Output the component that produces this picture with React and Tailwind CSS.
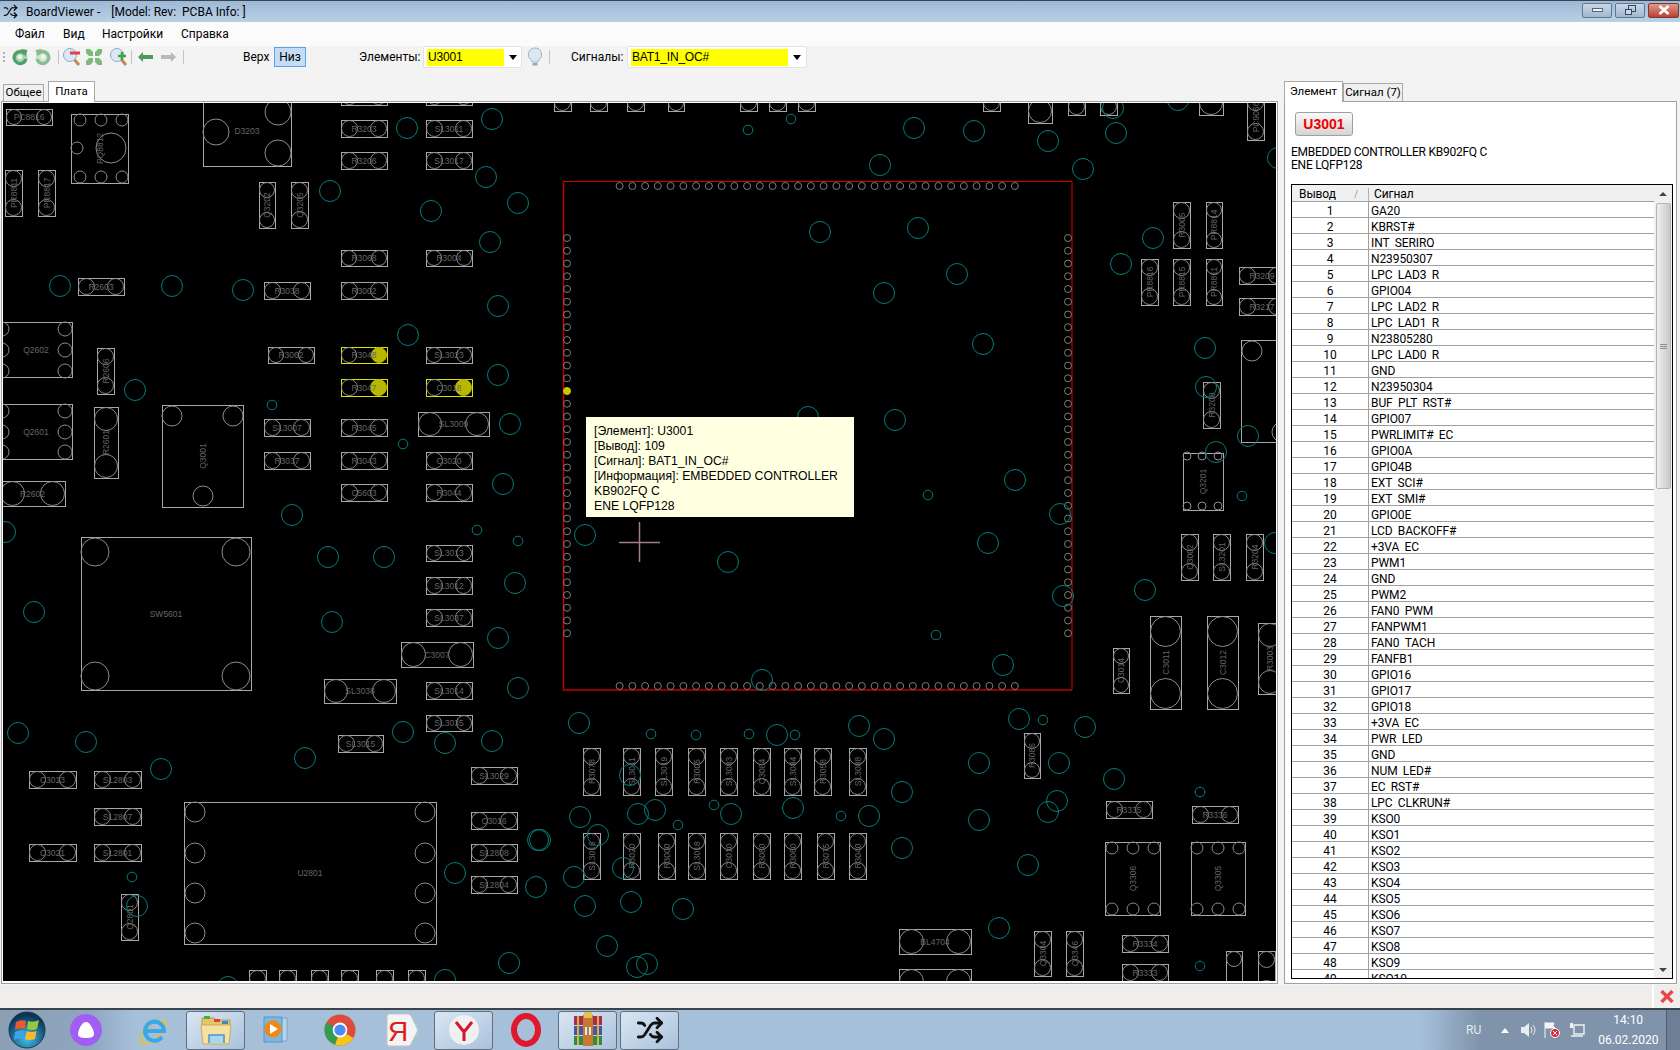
import React from "react";
import { Shuffle } from "lucide-react";

const pins = [
  "GA20", "KBRST#", "INT_SERIRQ", "N23950307", "LPC_LAD3_R", "GPIO04", "LPC_LAD2_R", "LPC_LAD1_R",
  "N23805280", "LPC_LAD0_R", "GND", "N23950304", "BUF_PLT_RST#", "GPIO07", "PWRLIMIT#_EC", "GPIO0A",
  "GPIO4B", "EXT_SCI#", "EXT_SMI#", "GPIO0E", "LCD_BACKOFF#", "+3VA_EC", "PWM1", "GND", "PWM2",
  "FAN0_PWM", "FANPWM1", "FAN0_TACH", "FANFB1", "GPIO16", "GPIO17", "GPIO18", "+3VA_EC", "PWR_LED",
  "GND", "NUM_LED#", "EC_RST#", "LPC_CLKRUN#", "KSO0", "KSO1", "KSO2", "KSO3", "KSO4", "KSO5", "KSO6",
  "KSO7", "KSO8", "KSO9", "KSO10",
];

// two pad parts: x1, y1, x2, y2, label, highlighted pad
const parts = [
  [6, 109, 52, 125, "PC8816"], [5, 170, 22, 216, "PR8811"], [38, 170, 55, 216, "PR8817"],
  [259, 182, 275, 228, "Q3202"], [291, 182, 308, 228, "Q3205"],
  [341, 88, 387, 105, ""], [426, 88, 472, 105, ""],
  [341, 120, 387, 137, "R3203"], [426, 120, 472, 137, "SL3011"], [341, 152, 387, 169, "R3206"], [426, 152, 472, 169, "SL3017"],
  [341, 250, 387, 266, "R3068"], [426, 250, 472, 266, "R3004"], [78, 278, 124, 295, "R2603"],
  [264, 282, 310, 299, "R3038"], [341, 282, 387, 299, "R3002"], [268, 347, 314, 363, "R3062"],
  [341, 347, 387, 363, "R3048", true], [341, 379, 387, 396, "R3047", true], [426, 379, 472, 396, "C3018", true],
  [426, 347, 472, 363, "SL3023"], [97, 348, 114, 394, "R2606"], [94, 407, 118, 478, "R2601"],
  [0, 481, 65, 506, "R2602"], [264, 419, 310, 436, "SL3007"], [341, 419, 387, 436, "R3045"], [418, 412, 489, 436, "SL3009"],
  [264, 452, 310, 469, "R3037"], [341, 452, 387, 469, "R3043"], [426, 452, 472, 469, "C3020"],
  [341, 484, 387, 501, "C5603"], [426, 484, 472, 501, "R3044"],
  [426, 545, 472, 561, "SL3013"], [426, 577, 472, 594, "SL3012"], [426, 609, 472, 626, "SL3037"], [401, 642, 473, 667, "C3007"],
  [324, 679, 396, 703, "SL3038"], [426, 682, 472, 699, "SL3014"], [426, 715, 472, 731, "SL3035"], [338, 735, 383, 752, "SL3015"],
  [29, 771, 76, 788, "C3013"], [94, 771, 141, 788, "SL2803"], [94, 808, 141, 825, "SL2807"], [94, 844, 141, 861, "SL2801"],
  [29, 844, 76, 861, "C3021"], [471, 767, 517, 784, "SL3029"], [471, 812, 517, 829, "C3016"], [471, 844, 517, 861, "SL2808"],
  [471, 876, 517, 893, "SL2804"], [121, 894, 138, 940, "Q2801"],
  [249, 970, 266, 1016, ""], [279, 970, 296, 1016, ""], [311, 970, 328, 1016, ""], [341, 970, 358, 1016, ""], [376, 970, 393, 1016, ""], [408, 970, 425, 1016, ""],
  [554, 65, 571, 111, ""], [590, 65, 607, 111, ""], [627, 65, 644, 111, ""], [668, 65, 684, 111, ""], [740, 65, 757, 111, ""],
  [769, 65, 786, 111, ""], [798, 65, 815, 111, ""], [983, 65, 1000, 111, ""], [1028, 68, 1052, 123, ""], [1068, 69, 1085, 115, ""],
  [1100, 69, 1117, 115, ""], [1199, 60, 1223, 115, ""], [1247, 94, 1264, 140, "PC9066"],
  [583, 748, 600, 795, "R3078"], [623, 748, 640, 795, "SL3011"], [655, 748, 672, 795, "SL3019"], [688, 748, 705, 795, "R3005"],
  [720, 748, 737, 795, "SL3083"], [753, 748, 770, 795, "Q3084"], [784, 748, 801, 795, "SL3084"], [814, 748, 831, 795, "R3058"], [849, 748, 866, 795, "SL3088"],
  [583, 833, 600, 879, "SL3016"], [623, 833, 640, 879, "R3020"], [658, 833, 675, 879, "R3000"], [688, 833, 705, 879, "SL3018"],
  [720, 833, 737, 879, "C3010"], [753, 833, 770, 879, "R3080"], [784, 833, 801, 879, "R3060"], [817, 833, 834, 879, "R3075"], [849, 833, 866, 879, "R3040"],
  [1173, 202, 1190, 248, "R3005"], [1206, 202, 1222, 248, "PR8814"], [1141, 259, 1158, 305, "PR8816"], [1173, 259, 1190, 305, "PR8815"],
  [1206, 259, 1222, 305, "PR8811"], [1239, 267, 1285, 284, "R3209"], [1239, 298, 1285, 315, "R3217"], [1203, 382, 1220, 428, "R3208"],
  [1181, 534, 1198, 580, "Q3002"], [1213, 534, 1230, 580, "SL3201"], [1246, 534, 1263, 580, "R3204"], [1113, 648, 1129, 693, "C3014"],
  [1150, 616, 1181, 709, "C3011"], [1207, 616, 1238, 709, "C3012"], [1258, 623, 1282, 694, "R3003"], [1024, 733, 1040, 778, "R3086"],
  [1106, 801, 1152, 818, "R3335"], [1192, 806, 1238, 823, "R3336"], [1034, 931, 1051, 976, "Q3304"], [1066, 931, 1083, 976, "Q3346"],
  [1122, 935, 1168, 952, "R3334"], [1122, 964, 1168, 981, "R3333"], [1226, 951, 1242, 997, ""], [1258, 951, 1275, 997, ""],
  [899, 929, 971, 954, "BL4704"], [899, 969, 971, 994, ""],
];

// packages with their own pad layout: x1, y1, x2, y2, label, vertical label, pads [x, y, r]
const packages = [
  [71, 114, 128, 183, "PQ8812", true, [[111, 148, 15], [80, 120, 6], [101, 120, 6], [122, 120, 6], [77, 148, 6], [80, 177, 6], [101, 177, 6], [122, 177, 6]]],
  [203, 80, 291, 166, "D3203", false, [[216, 132, 13], [278, 112, 13], [278, 153, 13]]],
  [-10, 322, 72, 377, "Q2602", false, [[65, 329, 7], [65, 350, 7], [65, 371, 7], [2, 329, 7], [2, 350, 7], [2, 371, 7]]],
  [-10, 404, 72, 459, "Q2601", false, [[65, 411, 7], [65, 432, 7], [65, 452, 7], [2, 411, 7], [2, 432, 7], [2, 452, 7]]],
  [162, 405, 243, 507, "Q3001", true, [[172, 416, 10], [233, 416, 10], [203, 496, 10]]],
  [81, 537, 251, 690, "SW5601", false, [[95, 552, 14], [236, 552, 14], [95, 676, 14], [236, 676, 14]]],
  [184, 802, 436, 944, "U2801", false, [[195, 812, 10], [195, 853, 10], [195, 893, 10], [195, 933, 10], [425, 812, 10], [425, 853, 10], [425, 893, 10], [425, 933, 10]]],
  [1183, 453, 1223, 510, "Q3201", true, [[1187, 456, 4], [1202, 456, 4], [1218, 456, 4], [1187, 506, 4], [1202, 506, 4], [1218, 506, 4]]],
  [1241, 340, 1300, 442, "", false, [[1252, 351, 10], [1282, 432, 10]]],
  [1105, 842, 1160, 915, "Q3306", true, [[1112, 848, 6], [1133, 848, 6], [1154, 848, 6], [1112, 909, 6], [1133, 909, 6], [1154, 909, 6]]],
  [1191, 842, 1245, 915, "Q3305", true, [[1197, 848, 6], [1218, 848, 6], [1239, 848, 6], [1197, 909, 6], [1218, 909, 6], [1239, 909, 6]]],
];

const vias = [
  [407, 128], [492, 119], [486, 177], [518, 203], [431, 211], [330, 191], [490, 242], [60, 286], [172, 286], [243, 290], [498, 306], [408, 335],
  [498, 375], [135, 390], [510, 424], [503, 484], [292, 515], [5, 532], [34, 612], [18, 733], [86, 742], [161, 769], [328, 557], [384, 557],
  [515, 583], [332, 622], [498, 638], [518, 688], [403, 732], [445, 743], [492, 741], [305, 758], [538, 840], [455, 873], [536, 887], [137, 906],
  [509, 963], [228, 987], [445, 980], [914, 128], [974, 131], [1048, 141], [880, 165], [1083, 169], [820, 232], [918, 228], [957, 274], [884, 293],
  [983, 344], [808, 417], [895, 420], [1015, 480], [1060, 514], [585, 535], [988, 543], [728, 562], [1003, 665], [762, 680], [579, 723], [777, 735],
  [859, 726], [884, 739], [1019, 719], [1085, 727], [979, 763], [1059, 763], [630, 775], [902, 792], [655, 810], [638, 814], [731, 814], [793, 808],
  [869, 816], [580, 817], [979, 820], [1057, 801], [1048, 812], [598, 835], [540, 840], [623, 868], [902, 848], [1028, 865], [574, 877], [585, 906],
  [631, 902], [683, 909], [607, 946], [647, 964], [637, 967], [999, 928], [1113, 108], [1116, 133], [1278, 158], [1153, 238], [1121, 264], [1205, 348],
  [1206, 387], [1248, 436], [1216, 452], [1275, 543], [1178, 100], [1145, 590], [1063, 596], [1114, 779],
];

const smallVias = [
  [272, 405], [403, 444], [477, 530], [518, 541], [132, 877], [748, 130], [791, 119], [928, 495], [936, 635], [651, 734], [696, 735], [749, 734], [795, 735],
  [1043, 720], [714, 805], [678, 825], [841, 816], [1242, 496], [1200, 792], [1200, 966],
];

const pinOffsets = Array.from({ length: 32 }, (_, i) => i);

function Part({ part }) {
  const [x1, y1, x2, y2, label, hot] = part;
  const w = x2 - x1;
  const h = y2 - y1;
  const wide = w > h;
  const r = Math.min(w, h) / 2 - 0.5;
  const a = wide ? [x1 + r + 0.5, y1 + h / 2] : [x1 + w / 2, y1 + r + 0.5];
  const b = wide ? [x2 - r - 0.5, y1 + h / 2] : [x1 + w / 2, y2 - r - 0.5];
  const cx = x1 + w / 2;
  const cy = y1 + h / 2;
  return (
    <g>
      <rect x={x1 + 0.5} y={y1 + 0.5} width={w} height={h} fill="none" stroke={hot ? "#e0e000" : "#a8a8a8"} />
      <circle cx={a[0]} cy={a[1]} r={r} fill="none" stroke="#8c8c8c" />
      <circle cx={b[0]} cy={b[1]} r={r} fill={hot ? "#b8b800" : "none"} stroke={hot ? "#b8b800" : "#8c8c8c"} />
      {label && (
        <text
          x={cx}
          y={cy + 3}
          textAnchor="middle"
          fontSize="8.5"
          fill="#666666"
          transform={wide ? undefined : `rotate(-90 ${cx} ${cy})`}
        >
          {label}
        </text>
      )}
    </g>
  );
}

function Package({ pack }) {
  const [x1, y1, x2, y2, label, vertical, pads] = pack;
  const cx = (x1 + x2) / 2 + (x1 < 0 ? 5 : 0);
  const cy = (y1 + y2) / 2 + (label === "D3203" ? 8 : 0);
  return (
    <g>
      <rect x={x1 + 0.5} y={y1 + 0.5} width={x2 - x1} height={y2 - y1} fill="none" stroke="#a8a8a8" />
      {pads.map(([x, y, r], i) => (
        <circle key={i} cx={x} cy={y} r={r} fill="none" stroke="#8c8c8c" />
      ))}
      {label && (
        <text
          x={cx}
          y={cy + 3}
          textAnchor="middle"
          fontSize="8.5"
          fill="#666666"
          transform={vertical ? `rotate(-90 ${cx} ${cy})` : undefined}
        >
          {label}
        </text>
      )}
    </g>
  );
}

function BoardDrawing() {
  return (
    <svg viewBox="3 103 1273 878" className="block w-[1273px] h-[878px] bg-black">
      {parts.map((part, i) => (
        <Part key={i} part={part} />
      ))}
      {packages.map((pack, i) => (
        <Package key={i} pack={pack} />
      ))}
      <path d="M563.5 181.5H1072V690" fill="none" stroke="#e00000" />
      <path d="M563.5 181.5V690H1072" fill="none" stroke="#c00000" strokeWidth="1.5" />
      {pinOffsets.map((i) => (
        <g key={i} fill="none" stroke="#7c7c7c">
          <circle cx={619.6 + i * 12.75} cy="186" r="3.5" />
          <circle cx={619.6 + i * 12.75} cy="686" r="3.5" />
          <circle cx="1068" cy={238 + i * 12.75} r="3.5" />
          {i === 12 ? (
            <circle cx="567" cy={391} r="3.5" fill="#c8c800" stroke="#c8c800" />
          ) : (
            <circle cx="567" cy={238 + i * 12.75} r="3.5" />
          )}
        </g>
      ))}
      {vias.map(([x, y], i) => (
        <circle key={i} cx={x} cy={y} r="10.5" fill="none" stroke="#067c7c" />
      ))}
      {smallVias.map(([x, y], i) => (
        <circle key={i} cx={x} cy={y} r="4.8" fill="none" stroke="#067c7c" />
      ))}
      <path d="M619 542.5h41M639.5 522v40" stroke="#a37c84" strokeWidth="1.5" />
    </svg>
  );
}

function RefreshIcon({ flip, light }) {
  const c = light ? "#86bd8c" : "#4f9f66";
  return (
    <svg width="16" height="18" viewBox="0 0 16 18" className={flip ? "-scale-x-100" : ""}>
      <circle cx="8" cy="9" r="7.5" fill={light ? "#cfe5d0" : "#a8d4b0"} />
      <path d="M13 6a6 6 0 1 0 1 5" fill="none" stroke={c} strokeWidth="3.2" />
      <path d="M9 1l6.5 1-2 6.5z" fill={c} />
      <circle cx="8" cy="9" r="2.4" fill="#edf5ed" />
    </svg>
  );
}

function LoupeIcon({ plus }) {
  return (
    <svg width="20" height="20" viewBox="0 0 20 20">
      <path d="M11 11l6 7" stroke="#c48a50" strokeWidth="3" />
      <circle cx="8" cy="8" r="6.5" fill="#dce8f6" stroke="#8ea8c8" />
      {plus ? (
        <path d="M13 5v8M9 9h8" stroke="#46a046" strokeWidth="2.6" />
      ) : (
        <path d="M8 6h10" stroke="#e0404c" strokeWidth="3" />
      )}
    </svg>
  );
}

function FitIcon() {
  return (
    <svg width="18" height="18" viewBox="0 0 18 18" fill="#7cba7c">
      <path d="M1 1l4 0 3 3 0-1 0 5-5 0 1 0-3-3zM17 1l-4 0-3 3 0-1 0 5 5 0-1 0 3-3zM1 17l4 0 3-3 0 1 0-5-5 0 1 0-3 3zM17 17l-4 0-3-3 0 1 0-5 5 0-1 0 3 3z" />
    </svg>
  );
}

function ArrowIcon({ color, right }) {
  return (
    <svg width="15" height="10" viewBox="0 0 15 10" className={right ? "-scale-x-100" : ""}>
      <path d="M0 5l5-5v3h10v4H5v3z" fill={color} />
    </svg>
  );
}

function BulbIcon() {
  return (
    <svg width="16" height="20" viewBox="0 0 16 20">
      <path d="M8 1a6.5 6.5 0 0 0-3.5 12l.7 2h5.6l.7-2A6.5 6.5 0 0 0 8 1z" fill="#dbe8f2" stroke="#9cb4c8" />
      <path d="M5.5 16h5v2.5h-5z" fill="#9aa4ac" />
    </svg>
  );
}

function ToolSep() {
  return <div className="w-px h-[14px] bg-[#c4c4c4]" />;
}

function Combo({ width, fill, value }) {
  return (
    <div style={{ width }} className="h-[22px] bg-white border border-[#e2e2e2] flex items-center pl-[3px] rounded-[2px]">
      <div style={{ width: fill }} className="h-[17px] bg-[#ffff00] text-[12px] leading-[16px] tracking-[-0.2px] text-black pl-px">
        {value}
      </div>
      <div className="flex-1 flex justify-center">
        <div className="w-0 h-0 border-l-[4px] border-r-[4px] border-t-[5px] border-l-transparent border-r-transparent border-t-black" />
      </div>
    </div>
  );
}

function WinButton({ children, className }) {
  return (
    <div className={`h-[15px] border border-[#5f7890] rounded-[2px] flex items-center justify-center ${className}`}>
      {children}
    </div>
  );
}

function TaskButton({ children, active }) {
  return (
    <div
      className={`w-[59px] h-[39px] flex items-center justify-center rounded-[3px] ${
        active ? "bg-linear-to-br from-[#dbe6f2] to-[#a9c2dc] border border-[#5f6f80]" : ""
      }`}
    >
      {children}
    </div>
  );
}

function StartOrb() {
  return (
    <svg width="38" height="38" viewBox="0 0 38 38">
      <defs>
        <radialGradient id="orb" cx="50%" cy="75%" r="65%">
          <stop offset="0%" stopColor="#3fc0ee" />
          <stop offset="100%" stopColor="#0a3558" />
        </radialGradient>
      </defs>
      <circle cx="19" cy="19" r="18" fill="url(#orb)" stroke="#1c3850" />
      <path d="M8 11q5-3 10-1l-1 8q-5-2-10 1z" fill="#e85a30" />
      <path d="M20 10q5 2 11-1l-2 9q-5 2-10 0z" fill="#9ac83c" />
      <path d="M7 21q5-3 10-1l-1 8q-5-2-10 1z" fill="#3ca4e8" />
      <path d="M18.5 20q5 2 10 0l-1.5 8q-5 2-10 0z" fill="#f4bc2c" />
    </svg>
  );
}

function AliceIcon() {
  return (
    <svg width="32" height="32" viewBox="0 0 32 32">
      <circle cx="16" cy="16" r="16" fill="#a05ef4" />
      <path d="M16 8c4 0 8 8 8 12 0 3-3 4-8 4s-8-1-8-4c0-4 4-12 8-12z" fill="#fff" />
    </svg>
  );
}

function IeIcon() {
  return (
    <svg width="32" height="32" viewBox="0 0 32 32">
      <ellipse cx="15" cy="18" rx="16" ry="7" transform="rotate(-40 15 18)" fill="none" stroke="#f0c020" strokeWidth="1.6" />
      <path d="M7 17h19a9.5 9.5 0 1 0-2 6" fill="none" stroke="#38a8e8" strokeWidth="4" />
    </svg>
  );
}

function FolderIcon() {
  return (
    <svg width="32" height="32" viewBox="0 0 32 32">
      <path d="M2 4h12l2 2h14v8H2z" fill="#e8c464" stroke="#b89a48" />
      <path d="M4 2h6v3H4z" fill="#40b048" />
      <path d="M14 5h6v3h-6z" fill="#d04838" />
      <path d="M22 7h6v3h-6z" fill="#2c8ce0" />
      <path d="M1 11h30l-2 19H3z" fill="#f6e2a0" stroke="#c8ac60" />
      <path d="M9 29v-8h15v8" fill="#a8d8f0" stroke="#4c94c8" strokeWidth="1.5" />
    </svg>
  );
}

function PlayerIcon() {
  return (
    <svg width="32" height="30" viewBox="0 0 32 30">
      <path d="M9 3h18v23H9z" fill="#b4d4ea" stroke="#7ea6c6" />
      <path d="M4 2h18v25H4z" fill="#7eb6de" stroke="#5a94c0" />
      <circle cx="13" cy="14" r="8.5" fill="#f08818" />
      <path d="M10 9l8 5-8 5z" fill="#fff" />
    </svg>
  );
}

function ChromeIcon() {
  return (
    <svg width="32" height="32" viewBox="0 0 32 32">
      <circle cx="16" cy="16" r="15.5" fill="#dd4b3c" />
      <path d="M16 16L29.4 24A15.5 15.5 0 0 1 11 30.6z" fill="#f5c518" />
      <path d="M16 16L11 30.6A15.5 15.5 0 0 1 2.6 8.2z" fill="#2f9e50" />
      <circle cx="16" cy="16" r="7.4" fill="#fff" />
      <circle cx="16" cy="16" r="5.6" fill="#4c8bf5" />
    </svg>
  );
}

function YandexIcon() {
  return (
    <svg width="32" height="34" viewBox="0 0 32 34">
      <path d="M3 1h19q2 0 3 2l6 12q1 2 0 4l-6 12q-1 2-3 2H3q-2 0-2-2V3q0-2 2-2z" fill="#f4f4f4" stroke="#c4c4c4" />
      <text x="12" y="28" textAnchor="middle" fontSize="28" fill="#e01c1c">Я</text>
    </svg>
  );
}

function YandexBrowser() {
  return (
    <svg width="30" height="30" viewBox="0 0 30 30">
      <circle cx="15" cy="15" r="15" fill="#f0f0f0" />
      <path d="M7 7l8 10 8-10M15 17v9" fill="none" stroke="#d8142c" strokeWidth="3" />
    </svg>
  );
}

function OperaIcon() {
  return (
    <svg width="30" height="34" viewBox="0 0 30 34">
      <ellipse cx="15" cy="17" rx="12" ry="14" fill="none" stroke="#e0182c" strokeWidth="6" />
    </svg>
  );
}

function RarIcon() {
  return (
    <svg width="32" height="36" viewBox="0 0 32 36">
      <path d="M2 4h28v9H2z" fill="#a82c50" />
      <path d="M2 14h28v9H2z" fill="#4854a8" />
      <path d="M2 24h28v9H2z" fill="#2c8c48" />
      <path d="M5 4h2v29H5zM25 4h2v29h-2z" fill="#d8b040" />
      <path d="M11 3h10v31H11z" fill="#c87830" />
      <path d="M12 0h8v6h-8z" fill="#e8c050" />
      <path d="M13 15h6v8h-6z" fill="#f0e8d0" />
      <path d="M15.5 15h1v8h-1z" fill="#402010" />
    </svg>
  );
}

function TrayIcons() {
  return (
    <>
      <svg width="8" height="5" viewBox="0 0 8 5" className="ml-[20px]">
        <path d="M0 5l4-5 4 5z" fill="#fff" />
      </svg>
      <svg width="16" height="14" viewBox="0 0 16 14" className="ml-[12px]">
        <path d="M0 4h3l5-4v14l-5-4H0z" fill="#e8edf2" />
        <path d="M10 4q2 3 0 6M12 2q4 5 0 10" fill="none" stroke="#e8edf2" />
      </svg>
      <svg width="16" height="16" viewBox="0 0 16 16" className="ml-[7px]">
        <path d="M1 0v16M1 1h9l-1 3 2 2H1" fill="#f4f4f4" stroke="#f4f4f4" />
        <circle cx="11" cy="11" r="4.5" fill="#d82c3c" stroke="#fff" />
        <path d="M9 9l4 4M13 9l-4 4" stroke="#fff" />
      </svg>
      <svg width="16" height="16" viewBox="0 0 16 16" className="ml-[9px]">
        <path d="M5 3h10v9H5zM2 14h12" fill="none" stroke="#f0f0f0" strokeWidth="1.4" />
        <path d="M1 1h3v5H1z" fill="#f0f0f0" />
      </svg>
    </>
  );
}

export default function App() {
  return (
    <div className="w-[1680px] h-[1050px] overflow-hidden flex flex-col bg-[#f3f3f3] text-black font-['Liberation_Sans',sans-serif]">
      <div className="h-[22px] flex items-center justify-between border-t border-[#3d4349] bg-linear-to-b from-[#9db9d6] to-[#bbd0e6]">
        <div className="flex items-center pl-[3px] font-['Roboto',sans-serif] text-[12px]">
          <Shuffle size={15} strokeWidth={2} color="#111" />
          <span className="ml-[8px]">BoardViewer -</span>
          <span className="ml-[11px]">[Model: Rev:&nbsp; PCBA Info: ]</span>
        </div>
        <div className="flex gap-[3px] mb-[3px] mr-[1px]">
          <WinButton className="w-[30px] bg-linear-to-b from-[#c8d8e8] to-[#9fb8d0]">
            <div className="w-[11px] h-[4px] bg-[#eef3f7] border border-[#54677a]" />
          </WinButton>
          <WinButton className="w-[30px] bg-linear-to-b from-[#c8d8e8] to-[#9fb8d0]">
            <div className="relative w-[11px] h-[10px]">
              <div className="absolute right-0 top-0 w-[8px] h-[7px] border border-[#36485a]" />
              <div className="absolute left-0 bottom-0 w-[7px] h-[6px] border border-[#36485a] bg-[#c8d8e8]" />
            </div>
          </WinButton>
          <WinButton className="w-[31px] bg-linear-to-b from-[#e0988c] to-[#b83e30] border-[#7c3a34]">
            <svg width="12" height="10" viewBox="0 0 12 10">
              <path d="M1.5 1l9 8M10.5 1l-9 8" stroke="#fff" strokeWidth="2.6" />
            </svg>
          </WinButton>
        </div>
      </div>

      <div className="h-[24px] bg-[#fbfbfb] flex items-center pl-[15px] font-['Roboto',sans-serif] text-[12px]">
        <span className="w-[48px]">Файл</span>
        <span className="w-[39px]">Вид</span>
        <span className="w-[79px]">Настройки</span>
        <span>Справка</span>
      </div>

      <div className="h-[22px] bg-[#f3f3f3] flex items-center relative">
        <div className="flex items-center w-[243px] pl-[3px]">
          <div className="w-[2px] h-[10px] border-l-2 border-dotted border-[#b0b0b0]" />
          <div className="ml-[7px]"><RefreshIcon /></div>
          <div className="ml-[7px]"><RefreshIcon flip light /></div>
          <div className="ml-[7px]"><ToolSep /></div>
          <div className="ml-[3px]"><LoupeIcon /></div>
          <div className="ml-[3px]"><FitIcon /></div>
          <div className="ml-[6px]"><LoupeIcon plus /></div>
          <div className="ml-[2px]"><ToolSep /></div>
          <div className="ml-[6px]"><ArrowIcon color="#4e9a58" /></div>
          <div className="ml-[8px]"><ArrowIcon color="#b8b8b8" right /></div>
          <div className="ml-[7px]"><ToolSep /></div>
        </div>
        <span className="font-['Roboto',sans-serif] text-[12px] w-[31px]">Верх</span>
        <div className="w-[32px] h-[20px] bg-[#c4dcf6] border border-[#5da2e4] flex items-center justify-center font-['Roboto',sans-serif] text-[12px]">
          Низ
        </div>
        <span className="ml-[53px] w-[64px] font-['Roboto',sans-serif] text-[12px]">Элементы:</span>
        <Combo width={99} fill={77} value="U3001" />
        <div className="ml-[5px]"><BulbIcon /></div>
        <div className="ml-[6px]"><ToolSep /></div>
        <span className="ml-[21px] w-[56px] font-['Roboto',sans-serif] text-[12px]">Сигналы:</span>
        <Combo width={180} fill={157} value="BAT1_IN_OC#" />
      </div>

      <div className="h-[917px] flex">
        <div className="w-[1279px] pl-px">
          <div className="h-[33px] flex items-end pl-[2px] font-['Roboto',sans-serif] text-[11.5px]">
            <div className="w-[41px] h-[17px] bg-[#f0f0f0] border border-b-0 border-[#a8a8a8] flex items-center justify-center">
              Общее
            </div>
            <div className="ml-[4px] w-[47px] h-[21px] bg-white border border-b-0 border-[#a8a8a8] flex items-center justify-center relative top-px z-10">
              Плата
            </div>
          </div>
          <div className="w-[1277px] h-[883px] border border-[#a0a0a0] bg-white p-px relative">
            <BoardDrawing />
            <div className="absolute left-[584px] top-[315px] w-[268px] h-[100px] bg-[#ffffe1] px-[8px] py-[7px] text-[12.2px] leading-[15px]">
              <div>[Элемент]: U3001</div>
              <div>[Вывод]: 109</div>
              <div>[Сигнал]: BAT1_IN_OC#</div>
              <div>[Информация]: EMBEDDED CONTROLLER</div>
              <div>KB902FQ C</div>
              <div>ENE LQFP128</div>
            </div>
          </div>
        </div>

        <div className="ml-[5px] w-[393px]">
          <div className="h-[33px] flex items-end font-['Roboto',sans-serif] text-[11.5px]">
            <div className="w-[59px] h-[21px] bg-white border border-b-0 border-[#a8a8a8] flex items-center justify-center relative top-px z-10">
              Элемент
            </div>
            <div className="w-[60px] h-[18px] bg-[#f0f0f0] border border-b-0 border-[#a8a8a8] flex items-center justify-center">
              Сигнал (7)
            </div>
          </div>
          <div className="h-[883px] bg-white border border-[#a0a0a0] pt-[10px]">
            <div className="ml-[10px] w-[58px] h-[24px] rounded-[3px] border border-[#a0a0a0] bg-linear-to-b from-[#fafafa] to-[#d4d4d4] flex items-center justify-center font-bold text-[14px] text-[#f00000]">
              U3001
            </div>
            <div className="ml-[6px] mt-[10px] font-['Roboto',sans-serif] text-[12px] tracking-[-0.25px] leading-[13px]">
              <div>EMBEDDED CONTROLLER KB902FQ C</div>
              <div>ENE LQFP128</div>
            </div>
            <div className="ml-[6px] mt-[12px] w-[382px] h-[795px] border border-black flex font-['Roboto',sans-serif] text-[12px] tracking-[-0.1px]">
              <div className="w-[362px] overflow-hidden">
                <div className="h-[17px] pt-[2px] flex items-center bg-[#f0f0f0] border-b border-[#a0a0a0]">
                  <span className="w-[62px] pl-[7px]">Вывод</span>
                  <span className="w-[14px] text-[#999] text-[10px]">/</span>
                  <span className="w-px h-[13px] bg-[#b0b0b0]" />
                  <span className="pl-[5px]">Сигнал</span>
                </div>
                {pins.map((signal, i) => (
                  <div key={i} className="h-[16px] flex border-b border-[#a0a0a0] relative">
                    <div className="w-[76px] pt-[2px] leading-[14px] text-center">{i + 1}</div>
                    <div className="w-[3px] h-[16px] border-l border-[#a0a0a0] shrink-0" />
                    <div className="pt-[2px] leading-[14px]">{signal}</div>
                    <div className="absolute left-[79px] right-0 top-[13px] h-[2px] bg-white" />
                  </div>
                ))}
              </div>
              <div className="flex-1 bg-[#f0f0f0] flex flex-col items-center">
                <div className="h-[17px] flex items-center">
                  <div className="w-0 h-0 border-l-[4px] border-r-[4px] border-b-[4px] border-l-transparent border-r-transparent border-b-[#444]" />
                </div>
                <div className="w-[15px] h-[286px] mt-px rounded-[2px] border border-[#b4b4b4] bg-linear-to-r from-[#f0f0f0] to-[#c8c8c8] flex flex-col items-center justify-center gap-px">
                  <div className="w-[7px] h-px bg-[#8c8c8c]" />
                  <div className="w-[7px] h-px bg-[#8c8c8c]" />
                  <div className="w-[7px] h-px bg-[#8c8c8c]" />
                </div>
                <div className="mt-auto h-[17px] flex items-center">
                  <div className="w-0 h-0 border-l-[4px] border-r-[4px] border-t-[4px] border-l-transparent border-r-transparent border-t-[#444]" />
                </div>
              </div>
            </div>
          </div>
        </div>
      </div>

      <div className="h-[23px] bg-[#f0eded] flex justify-end">
        <div className="w-[28px] border-l-2 border-white flex items-center justify-center">
          <svg width="14" height="13" viewBox="0 0 14 13">
            <path d="M1.5 1l11 11M12.5 1l-11 11" stroke="#e8484c" strokeWidth="3.4" />
          </svg>
        </div>
      </div>

      <div className="h-[42px] border-t-2 border-[#39434e] flex items-center bg-[linear-gradient(90deg,#8b9fb5_0,#8fa6bf_90px,#a7c0da_135px,#a7c0da_1420px,#7f94aa_1480px,#7f94aa_100%)]">
        <div className="ml-[8px]"><StartOrb /></div>
        <div className="ml-[24px]"><AliceIcon /></div>
        <div className="ml-[36px]"><IeIcon /></div>
        <div className="ml-[16px]"><TaskButton active><FolderIcon /></TaskButton></div>
        <div className="ml-[15px]"><PlayerIcon /></div>
        <div className="ml-[32px]"><ChromeIcon /></div>
        <div className="ml-[30px]"><YandexIcon /></div>
        <div className="ml-[16px]"><TaskButton active><YandexBrowser /></TaskButton></div>
        <div className="ml-[18px]"><OperaIcon /></div>
        <div className="ml-[17px]"><TaskButton active><RarIcon /></TaskButton></div>
        <div className="ml-[3px]"><TaskButton active><Shuffle size={28} strokeWidth={2.4} color="#111" /></TaskButton></div>
        <span className="ml-[787px] text-[12px] text-[#e4eaf0] font-['Roboto',sans-serif]">RU</span>
        <TrayIcons />
        <div className="ml-[13px] w-[60px] text-center text-[12px] leading-[20px] text-white font-['Roboto',sans-serif]">
          <div>14:10</div>
          <div>06.02.2020</div>
        </div>
        <div className="ml-auto w-[14px] h-full bg-[#6c7f94] border-l border-[#4d5c6c]" />
      </div>
    </div>
  );
}
